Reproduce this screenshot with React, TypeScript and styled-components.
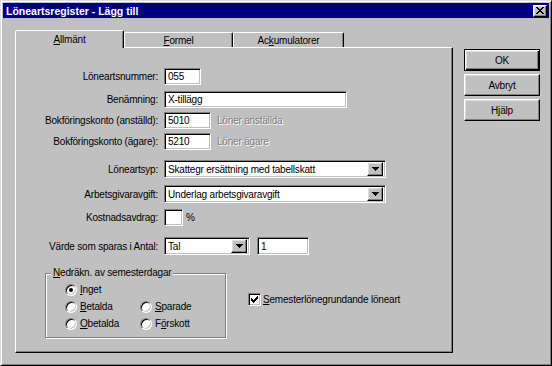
import React from "react";
import styled, { createGlobalStyle, css } from "styled-components";

const GlobalStyle = createGlobalStyle`
  html, body {
    margin: 0;
    padding: 0;
    background: #c0c0c0;
  }
  body {
    font-family: "Liberation Sans", Arial, sans-serif;
    font-size: 10px;
    letter-spacing: -0.2px;
    color: #000;
  }
`;

const raised = css`
  border: 1px solid;
  border-color: #fff #000 #000 #fff;
  box-shadow: inset -1px -1px #808080, inset 1px 1px #dfdfdf;
`;

const sunken = css`
  border: 1px solid;
  border-color: #808080 #fff #fff #808080;
  box-shadow: inset 1px 1px #000, inset -1px -1px #c0c0c0;
  background: #fff;
`;

const Window = styled.div`
  width: 552px;
  height: 366px;
  box-sizing: border-box;
  background: #c0c0c0;
  border: 1px solid;
  border-color: #dfdfdf #000 #000 #dfdfdf;
  box-shadow: inset 1px 1px #fff, inset -1px -1px #808080;
  padding: 2px;
  display: flex;
  flex-direction: column;
`;

const TitleBar = styled.div`
  height: 15px;
  background: #000080;
  color: #fff;
  display: flex;
  align-items: center;
  justify-content: space-between;
  padding: 0 2px 0 2px;
`;

const Title = styled.span`
  font-weight: bold;
  font-size: 10.5px;
  letter-spacing: 0;
  padding-left: 1px;
`;

const CloseButton = styled.div`
  ${raised};
  width: 12px;
  height: 10px;
  background: #c0c0c0;
  display: flex;
  align-items: center;
  justify-content: center;
`;

const Body = styled.div`
  display: flex;
  align-items: flex-start;
  padding: 11px 0 0 12px;
`;

const TabArea = styled.div`
  width: 438px;
  display: flex;
  flex-direction: column;
`;

const TabStrip = styled.div`
  height: 18px;
  display: flex;
  align-items: flex-end;
`;

const Tab = styled.div<{ $active?: boolean; $w: number }>`
  width: ${(p) => p.$w}px;
  height: ${(p) => (p.$active ? 18 : 15)}px;
  box-sizing: border-box;
  border: 1px solid;
  border-bottom: none;
  border-color: #fff #000 transparent #fff;
  border-radius: 2px 2px 0 0;
  box-shadow: inset -1px 0 #808080;
  background: #c0c0c0;
  display: flex;
  align-items: center;
  justify-content: center;
  position: relative;
  z-index: ${(p) => (p.$active ? 1 : 0)};
  margin-bottom: ${(p) => (p.$active ? -1 : 0)}px;
  padding-bottom: ${(p) => (p.$active ? 1 : 0)}px;
`;

const Panel = styled.div`
  height: 306px;
  box-sizing: border-box;
  border: 1px solid;
  border-color: #fff #000 #000 #fff;
  box-shadow: inset -1px -1px #808080;
  padding-top: 20px;
  display: flex;
  flex-direction: column;
`;

const Row = styled.div<{ $mt: number }>`
  display: flex;
  align-items: center;
  margin-top: ${(p) => p.$mt}px;
`;

const Label = styled.label`
  width: 142px;
  margin-right: 6px;
  text-align: right;
  white-space: nowrap;
`;

const Field = styled.div<{ $w: number; $h?: number }>`
  ${sunken};
  width: ${(p) => p.$w}px;
  height: ${(p) => p.$h ?? 17}px;
  box-sizing: border-box;
  padding: 0 2px 0 3px;
  display: flex;
  align-items: center;
  white-space: nowrap;
  overflow: hidden;
`;

const SelectBox = styled(Field)`
  justify-content: space-between;
  padding-right: 2px;
`;

const DropButton = styled.div`
  ${raised};
  width: 14px;
  height: 12px;
  flex: none;
  background: #c0c0c0;
  display: flex;
  align-items: center;
  justify-content: center;
`;

const Hint = styled.span`
  margin-left: 6px;
  color: #808080;
  text-shadow: 1px 1px #fff;
`;

const Suffix = styled.span<{ $ml: number }>`
  margin-left: ${(p) => p.$ml}px;
`;

const Bottom = styled.div`
  display: flex;
  align-items: flex-start;
  margin: 18px 0 0 29px;
`;

const Group = styled.div`
  position: relative;
  width: 181px;
  height: 65px;
  box-sizing: border-box;
  border: 1px solid #808080;
  box-shadow: 1px 1px #fff, inset 1px 1px #fff;
  display: grid;
  grid-template-columns: 75px 1fr;
  grid-auto-rows: 17px;
  padding: 7px 0 0 19px;
`;

const Legend = styled.span`
  position: absolute;
  top: -7px;
  left: 5px;
  padding: 0 2px;
  background: #c0c0c0;
`;

const Option = styled.div<{ $full?: boolean }>`
  display: flex;
  align-items: center;
  grid-column: ${(p) => (p.$full ? "1 / span 2" : "auto")};
`;

const Radio = styled.span<{ $on?: boolean }>`
  width: 12px;
  height: 12px;
  box-sizing: border-box;
  border-radius: 50%;
  border: 1px solid;
  border-color: #808080 #fff #fff #808080;
  box-shadow: inset 1px 1px #000, inset -1px -1px #c0c0c0;
  background: #fff;
  margin-right: 3px;
  display: flex;
  align-items: center;
  justify-content: center;
  &::after {
    content: "";
    display: ${(p) => (p.$on ? "block" : "none")};
    width: 4px;
    height: 4px;
    border-radius: 50%;
    background: #000;
  }
`;

const CheckRow = styled.div`
  display: flex;
  align-items: center;
  margin: 20px 0 0 22px;
`;

const CheckBox = styled.span`
  ${sunken};
  width: 13px;
  height: 13px;
  box-sizing: border-box;
  margin-right: 2px;
  display: flex;
  align-items: center;
  justify-content: center;
`;

const ButtonColumn = styled.div`
  display: flex;
  flex-direction: column;
  gap: 3px;
  margin: 20px 0 0 11px;
`;

const Button = styled.div<{ $default?: boolean }>`
  width: 76px;
  height: 22px;
  box-sizing: border-box;
  display: flex;
  align-items: center;
  justify-content: center;
  background: #c0c0c0;
  ${(p) =>
    p.$default
      ? css`
          border: 1px solid #000;
          box-shadow: inset 1px 1px #fff, inset -1px -1px #000,
            inset -2px -2px #808080, inset 2px 2px #dfdfdf;
        `
      : raised};
`;

const Arrow = () => (
  <svg width="7" height="4" viewBox="0 0 7 4">
    <path d="M0 0h7v1H0zM1 1h5v1H1zM2 2h3v1H2zM3 3h1v1H3z" fill="#000" />
  </svg>
);

const CloseGlyph = () => (
  <svg width="8" height="7" viewBox="0 0 8 7">
    <path
      d="M0 0h2v1H0zM6 0h2v1H6zM1 1h2v1H1zM5 1h2v1H5zM2 2h4v1H2zM3 3h2v1H3zM2 4h4v1H2zM1 5h2v1H1zM5 5h2v1H5zM0 6h2v1H0zM6 6h2v1H6z"
      fill="#000"
    />
  </svg>
);

const Tick = () => (
  <svg width="7" height="7" viewBox="0 0 7 7">
    <path
      d="M6 0h1v3H6zM5 1h1v3H5zM4 2h1v3H4zM3 3h1v3H3zM2 4h1v3H2zM1 3h1v3H1zM0 2h1v3H0z"
      fill="#000"
    />
  </svg>
);

const Select = ({ w, value }: { w: number; value: string }) => (
  <SelectBox $w={w} $h={18}>
    <span>{value}</span>
    <DropButton>
      <Arrow />
    </DropButton>
  </SelectBox>
);

export default function App() {
  return (
    <>
      <GlobalStyle />
      <Window>
        <TitleBar>
          <Title>Löneartsregister - Lägg till</Title>
          <CloseButton>
            <CloseGlyph />
          </CloseButton>
        </TitleBar>
        <Body>
          <TabArea>
            <TabStrip>
              <Tab $active $w={109}>
                <span>
                  <u>A</u>llmänt
                </span>
              </Tab>
              <Tab $w={109}>
                <span>
                  <u>F</u>ormel
                </span>
              </Tab>
              <Tab $w={111}>
                <span>
                  Ac<u>k</u>umulatorer
                </span>
              </Tab>
            </TabStrip>
            <Panel>
              <Row $mt={0}>
                <Label>Löneartsnummer:</Label>
                <Field $w={37}>055</Field>
              </Row>
              <Row $mt={6}>
                <Label>Benämning:</Label>
                <Field $w={183}>X-tillägg</Field>
              </Row>
              <Row $mt={4}>
                <Label>Bokföringskonto (anställd):</Label>
                <Field $w={47}>5010</Field>
                <Hint>Löner anställda</Hint>
              </Row>
              <Row $mt={4}>
                <Label>Bokföringskonto (ägare):</Label>
                <Field $w={47}>5210</Field>
                <Hint>Löner ägare</Hint>
              </Row>
              <Row $mt={10}>
                <Label>Löneartsyp:</Label>
                <Select w={222} value="Skattegr ersättning med tabellskatt" />
              </Row>
              <Row $mt={7}>
                <Label>Arbetsgivaravgift:</Label>
                <Select w={222} value="Underlag arbetsgivaravgift" />
              </Row>
              <Row $mt={6}>
                <Label>Kostnadsavdrag:</Label>
                <Field $w={19} />
                <Suffix $ml={3}>%</Suffix>
              </Row>
              <Row $mt={11}>
                <Label>Värde som sparas i Antal:</Label>
                <Select w={86} value="Tal" />
                <Suffix $ml={7}>
                  <Field $w={52} $h={18}>
                    1
                  </Field>
                </Suffix>
              </Row>
              <Bottom>
                <Group>
                  <Legend>
                    <u>N</u>edräkn. av semesterdagar
                  </Legend>
                  <Option $full>
                    <Radio $on />
                    <span>
                      <u>I</u>nget
                    </span>
                  </Option>
                  <Option>
                    <Radio />
                    <span>
                      <u>B</u>etalda
                    </span>
                  </Option>
                  <Option>
                    <Radio />
                    <span>
                      <u>S</u>parade
                    </span>
                  </Option>
                  <Option>
                    <Radio />
                    <span>
                      <u>O</u>betalda
                    </span>
                  </Option>
                  <Option>
                    <Radio />
                    <span>
                      F<u>ö</u>rskott
                    </span>
                  </Option>
                </Group>
                <CheckRow>
                  <CheckBox>
                    <Tick />
                  </CheckBox>
                  <span>
                    <u>S</u>emesterlönegrundande löneart
                  </span>
                </CheckRow>
              </Bottom>
            </Panel>
          </TabArea>
          <ButtonColumn>
            <Button $default>OK</Button>
            <Button>Avbryt</Button>
            <Button>Hjälp</Button>
          </ButtonColumn>
        </Body>
      </Window>
    </>
  );
}
